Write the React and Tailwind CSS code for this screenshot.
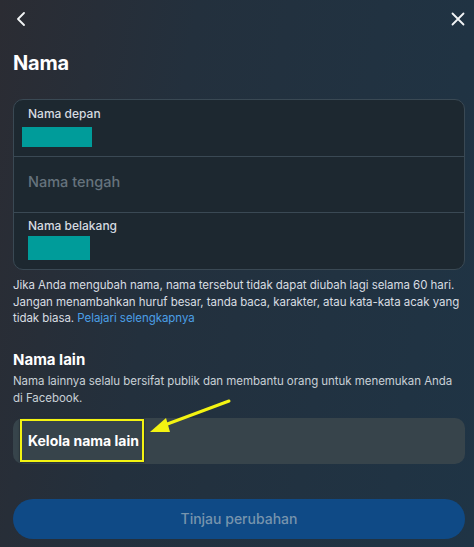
import React from "react";

export default function App() {
  return (
    <div
      className="relative w-[474px] h-[547px] overflow-hidden text-white bg-[linear-gradient(100deg,#2b2c33_0%,#23303d_35%,#1f3445_100%)]"
      style={{ fontFamily: "Inter, 'Noto Sans', sans-serif" }}
    >
      <div className="flex flex-col pl-[13px] pr-[9px]">
        {/* top bar */}
        <div className="flex items-center justify-between h-[37px] pt-[1px]">
          <svg width="14" height="14" viewBox="0 0 14 14" className="ml-[1px]">
            <path d="M10 1 L4 7 L10 13" fill="none" stroke="#f2f4f6" strokeWidth="1.8" strokeLinecap="round" strokeLinejoin="round" />
          </svg>
          <svg width="14" height="14" viewBox="0 0 14 14">
            <path d="M1.5 1.5 L12.5 12.5 M12.5 1.5 L1.5 12.5" fill="none" stroke="#f2f4f6" strokeWidth="1.8" strokeLinecap="round" />
          </svg>
        </div>

        <h1 className="mt-[14px] text-[20px] leading-[24px] font-bold tracking-[-0.2px]">Nama</h1>

        {/* card */}
        <div className="mt-[24px] rounded-[10px] border border-[#3a4954] bg-[#1d2830] flex flex-col">
          <div className="h-[56px] flex flex-col pl-[14px] pt-[6px]">
            <span className="text-[12px] leading-[16px] font-medium text-[#d6dbe0]">Nama depan</span>
            <div className="mt-[5px] ml-[-6px] w-[70px] h-[20px] bg-[#009c9a]" />
          </div>
          <div className="h-px bg-[#3a4954]" />
          <div className="h-[55px] flex items-center pl-[14px] pb-[5px]">
            <span className="text-[14.5px] font-medium text-[#66737d]">Nama tengah</span>
          </div>
          <div className="h-px bg-[#3a4954]" />
          <div className="h-[56px] flex flex-col pl-[14px] pt-[5px]">
            <span className="text-[12px] leading-[16px] font-medium text-[#d6dbe0]">Nama belakang</span>
            <div className="mt-[2px] w-[62px] h-[24px] bg-[#009c9a]" />
          </div>
        </div>

        <p className="mt-[7px] text-[11.5px] leading-[16.7px] text-[#d8dde2] tracking-[-0.05px]">
          Jika Anda mengubah nama, nama tersebut tidak dapat diubah lagi selama 60 hari. Jangan menambahkan huruf besar, tanda baca, karakter, atau kata-kata acak yang tidak biasa.{" "}
          <span className="text-[#4b9fe6]">Pelajari selengkapnya</span>
        </p>

        <h2 className="mt-[24px] text-[15px] leading-[18px] font-bold">Nama lain</h2>
        <p className="mt-[4px] text-[11.5px] leading-[16.7px] text-[#c8d0d6] tracking-[-0.05px]">
          Nama lainnya selalu bersifat publik dan membantu orang untuk menemukan Anda di Facebook.
        </p>

        <div className="mt-[11px] h-[46px] rounded-[10px] bg-[#37444b] flex items-center pl-[7px]">
          <div className="h-[43px] w-[124px] border-2 border-[#f3f312] flex items-center pl-[6px] shadow-[0_0_2px_rgba(0,0,0,0.6)]">
            <span className="text-[14px] font-bold text-white whitespace-nowrap">Kelola nama lain</span>
          </div>
        </div>

        <div className="mt-[35px] h-[40px] rounded-full bg-[#0f4a86] flex items-center justify-center">
          <span className="text-[14px] font-medium text-[#7794ad]">Tinjau perubahan</span>
        </div>
      </div>

      {/* arrow annotation */}
      <svg className="absolute left-0 top-0 pointer-events-none" width="474" height="547">
        <line x1="229" y1="401" x2="162" y2="426" stroke="#f3f312" strokeWidth="3" strokeLinecap="round" />
        <polygon points="150,432 166,418 170,432" fill="#f3f312" />
      </svg>
    </div>
  );
}
